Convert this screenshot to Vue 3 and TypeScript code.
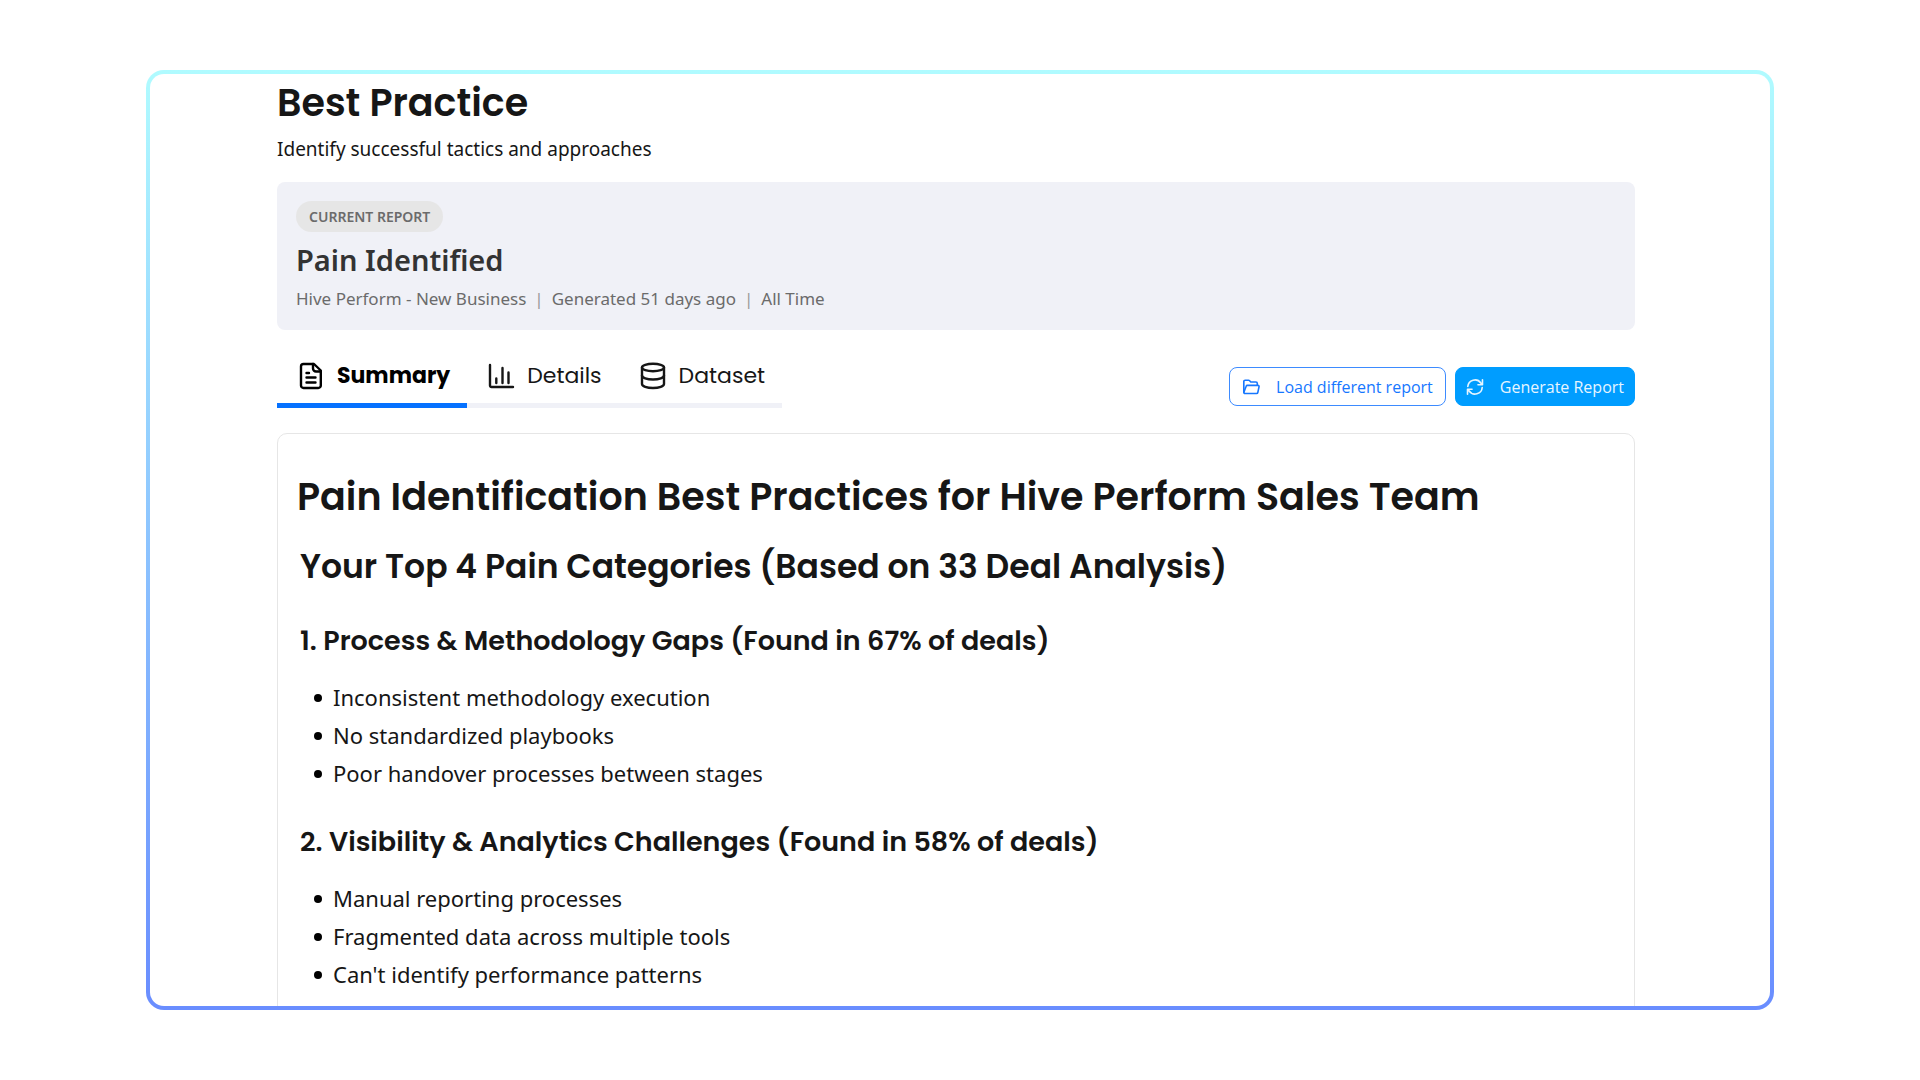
<script setup lang="ts">
import { ref } from 'vue'

type TabId = 'summary' | 'details' | 'dataset'

interface Tab {
  id: TabId
  label: string
}

interface Category {
  title: string
  points: string[]
}

const tabs: Tab[] = [
  { id: 'summary', label: 'Summary' },
  { id: 'details', label: 'Details' },
  { id: 'dataset', label: 'Dataset' },
]

const activeTab = ref<TabId>('summary')

const categories: Category[] = [
  {
    title: '1. Process & Methodology Gaps (Found in 67% of deals)',
    points: [
      'Inconsistent methodology execution',
      'No standardized playbooks',
      'Poor handover processes between stages',
    ],
  },
  {
    title: '2. Visibility & Analytics Challenges (Found in 58% of deals)',
    points: [
      'Manual reporting processes',
      'Fragmented data across multiple tools',
      "Can't identify performance patterns",
    ],
  },
]
</script>

<template>
  <main class="frame">
    <header class="page-head">
      <h1 class="page-title">Best Practice</h1>
      <p class="page-subtitle">Identify successful tactics and approaches</p>
    </header>

    <section class="report-card">
      <span class="badge">CURRENT REPORT</span>
      <h2 class="report-name">Pain Identified</h2>
      <p class="report-meta">
        <span>Hive Perform - New Business</span>
        <span class="divider">|</span>
        <span>Generated 51 days ago</span>
        <span class="divider">|</span>
        <span>All Time</span>
      </p>
    </section>

    <div class="toolbar">
      <nav class="tabs" role="tablist">
        <button
          v-for="tab in tabs"
          :key="tab.id"
          class="tab"
          :class="{ active: activeTab === tab.id }"
          type="button"
          role="tab"
          :aria-selected="activeTab === tab.id"
          @click="activeTab = tab.id"
        >
          <svg class="tab-icon" viewBox="0 0 28 28" aria-hidden="true">
            <template v-if="tab.id === 'summary'">
              <path d="M17 2H6.500a2.500 2.500 0 0 0-2.500 2.500v19a2.500 2.500 0 0 0 2.500 2.500h14.800a2.500 2.500 0 0 0 2.500-2.500V8.500L17 2z" />
              <path d="M16 2v4.500a3 3 0 0 0 3 3h4.800M9.500 11h2.500M9.500 15.500h9M9.500 20.500h9" />
            </template>
            <template v-else-if="tab.id === 'details'">
              <path d="M3 3v20.500a1.500 1.500 0 0 0 1.500 1.500H26M9.300 16.500v4.500M15.500 6v15M21.500 10.500v10.500" />
            </template>
            <template v-else>
              <ellipse cx="14" cy="5.500" rx="11" ry="3.700" />
              <path d="M3 5.500v16.500c0 2.200 4.900 4 11 4s11-1.800 11-4V5.500" />
              <path d="M3 13.500c0 2.200 4.900 4 11 4s11-1.800 11-4" />
            </template>
          </svg>
          {{ tab.label }}
        </button>
      </nav>

      <div class="actions">
        <button class="btn btn-outline" type="button">
          <svg class="btn-icon" viewBox="0 0 20 20" aria-hidden="true">
            <path d="M2 15.500V4a1.500 1.500 0 0 1 1.500-1.500h3.800c.5 0 .9.200 1.200.5l1.300 1.500h5.700A1.500 1.500 0 0 1 17 6v2" />
            <path d="M2 16l2.600-6.800A1.500 1.500 0 0 1 6 8.200h11.500c1 0 1.600.8 1.400 1.700l-1.300 6a1.500 1.500 0 0 1-1.500 1.300H3.300C2.600 17.200 2 16.700 2 16z" />
          </svg>
          Load different report
        </button>
        <button class="btn btn-primary" type="button">
          <svg class="btn-icon" viewBox="0 0 20 20" aria-hidden="true">
            <path d="M2 9.500a8 8 0 0 1 14.500-4l1.500 2M18.300 2v5.500h-5M18 10.500a8 8 0 0 1-14.500 4l-1.500-2M1.700 18v-5.500h5" />
          </svg>
          Generate Report
        </button>
      </div>
    </div>

    <article class="panel">
      <h2 class="doc-title">Pain Identification Best Practices for Hive Perform Sales Team</h2>
      <h3 class="doc-subtitle">Your Top 4 Pain Categories (Based on 33 Deal Analysis)</h3>
      <section v-for="category in categories" :key="category.title" class="category">
        <h4 class="category-title">{{ category.title }}</h4>
        <ul class="points">
          <li v-for="point in category.points" :key="point">{{ point }}</li>
        </ul>
      </section>
    </article>
  </main>
</template>

<style>
body {
  margin: 0;
  background: #fff;
}
</style>

<style scoped>
.frame {
  --display: Poppins, Inter, sans-serif;
  box-sizing: border-box;
  height: calc(100vh - 140px);
  margin: 70px 146px;
  padding: 5px 135px 0 127px;
  overflow: hidden;
  border: 4px solid transparent;
  border-radius: 18px;
  background:
    linear-gradient(#fff, #fff) padding-box,
    linear-gradient(180deg, #b0fbff, #698dff) border-box;
  color: #161616;
  font-family: 'Noto Sans', sans-serif;
}

h1,
h2,
h3,
h4,
p,
ul {
  margin: 0;
}

button {
  margin: 0;
  cursor: pointer;
}

svg {
  flex: none;
  fill: none;
  stroke: currentColor;
  stroke-linecap: round;
  stroke-linejoin: round;
}

.page-title {
  font: 600 38px/48px var(--display);
}

.page-subtitle {
  margin-top: 7px;
  font-size: 19px;
  line-height: 30px;
}

.report-card {
  margin-top: 18px;
  padding: 19px 19px 18px;
  border-radius: 8px;
  background: #f0f1f7;
}

.badge {
  display: block;
  width: fit-content;
  padding: 0 13px;
  border-radius: 16px;
  background: #e6e6e6;
  color: #6b6b6b;
  font-size: 14px;
  font-weight: 600;
  line-height: 31px;
}

.report-name {
  margin-top: 10px;
  color: #333;
  font-size: 29px;
  font-weight: 600;
  line-height: 36px;
}

.report-meta {
  display: flex;
  gap: 8px;
  margin-top: 8px;
  color: #6b6b6b;
  font-size: 17px;
  line-height: 26px;
}

.divider {
  color: #999;
}

.toolbar {
  display: flex;
  align-items: flex-end;
  justify-content: space-between;
  margin-top: 15px;
}

.tabs {
  display: flex;
}

.tab {
  display: flex;
  align-items: center;
  gap: 12px;
  height: 63px;
  padding: 3px 17px 0 20px;
  border: 0;
  border-bottom: 5px solid #f0f1f7;
  background: none;
  color: #161616;
  font: 400 22px/32px var(--display);
}

.tab.active {
  border-color: #0571ff;
  color: #000;
  font-weight: 700;
}

.tab-icon {
  width: 28px;
  height: 28px;
  stroke-width: 2.4;
}

.actions {
  display: flex;
  gap: 9px;
  margin-bottom: 2px;
}

.btn {
  display: flex;
  align-items: center;
  gap: 16px;
  height: 39px;
  padding: 0 12px;
  border: 1px solid;
  border-radius: 8px;
  font: 400 16px/24px 'Open Sans', sans-serif;
}

.btn-outline {
  border-color: #3d8bff;
  background: #fff;
  color: #1677ff;
}

.btn-primary {
  padding: 0 10px;
  border-color: #009dff;
  background: #009dff;
  color: #e6f5ff;
}

.btn-icon {
  width: 18px;
  height: 18px;
  stroke-width: 1.8;
}

.panel {
  margin-top: 25px;
  padding: 37px 19px;
  border: 1px solid #e6e6e6;
  border-radius: 10px;
}

.doc-title {
  font: 600 38px/52px var(--display);
}

.doc-subtitle {
  margin: 22px 3px 34px;
  font: 600 33px/44px var(--display);
}

.category {
  margin: 0 3px 32px;
}

.category-title {
  font: 600 27px/36px var(--display);
}

.points {
  margin-top: 19px;
  padding-left: 14px;
  font-size: 22px;
  line-height: 38px;
  list-style: none;
}

.points li {
  display: flex;
  align-items: center;
  gap: 11px;
}

.points li::before {
  width: 8px;
  height: 8px;
  margin-top: 2px;
  border-radius: 50%;
  background: #000;
  content: '';
}
</style>
